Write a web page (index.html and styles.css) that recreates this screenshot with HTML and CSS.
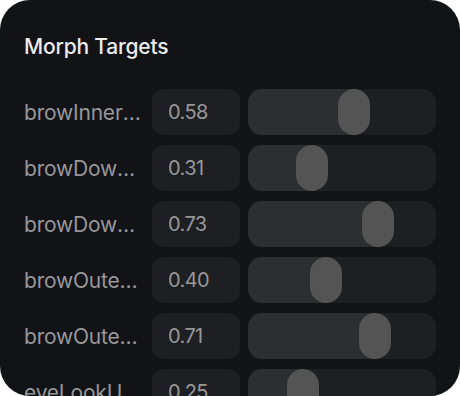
FILE: index.html
```html
<!DOCTYPE html>
<html>
<head>
<meta charset="utf-8">
<link rel="stylesheet" href="styles.css">
</head>
<body>
<div class="panel">
  <h2 class="title">Morph Targets</h2>
  <div class="rows">
    <div class="row">
      <span class="label">browInnerUp</span>
      <span class="value">0.58</span>
      <div class="track"><div class="fill" style="width: 106px"></div><div class="thumb" style="left: 90px"></div></div>
    </div>
    <div class="row">
      <span class="label">browDownLeft</span>
      <span class="value">0.31</span>
      <div class="track"><div class="fill" style="width: 64px"></div><div class="thumb" style="left: 48px"></div></div>
    </div>
    <div class="row">
      <span class="label">browDownRight</span>
      <span class="value">0.73</span>
      <div class="track"><div class="fill" style="width: 130px"></div><div class="thumb" style="left: 114px"></div></div>
    </div>
    <div class="row">
      <span class="label">browOuterUpLeft</span>
      <span class="value">0.40</span>
      <div class="track"><div class="fill" style="width: 78px"></div><div class="thumb" style="left: 62px"></div></div>
    </div>
    <div class="row">
      <span class="label">browOuterUpRight</span>
      <span class="value">0.71</span>
      <div class="track"><div class="fill" style="width: 127px"></div><div class="thumb" style="left: 111px"></div></div>
    </div>
    <div class="row">
      <span class="label">eyeLookUpLeft</span>
      <span class="value">0.25</span>
      <div class="track"><div class="fill" style="width: 55px"></div><div class="thumb" style="left: 39px"></div></div>
    </div>
  </div>
</div>
</body>
</html>
```
FILE: styles.css
```css
html, body {
  margin: 0;
  padding: 0;
  background: #ffffff;
}
body {
  font-family: Inter, "Noto Sans", sans-serif;
}
.panel {
  width: 460px;
  height: 396px;
  box-sizing: border-box;
  background: #121316;
  border-radius: 30px;
  overflow: hidden;
  padding: 35px 24px 0 24px;
}
.title {
  margin: 0 0 30px 0;
  font-size: 21px;
  line-height: 24px;
  font-weight: 500;
  color: #ececec;
  letter-spacing: -0.2px;
}
.rows {
  display: flex;
  flex-direction: column;
  gap: 10px;
}
.row {
  display: grid;
  grid-template-columns: 120px 88px 188px;
  column-gap: 8px;
  height: 46px;
  align-items: center;
}
.label {
  font-size: 21px;
  color: #979799;
  white-space: nowrap;
  overflow: hidden;
  text-overflow: ellipsis;
  letter-spacing: -0.2px;
}
.value {
  height: 46px;
  box-sizing: border-box;
  background: #1e1f22;
  border-radius: 12px;
  padding-left: 16px;
  display: flex;
  align-items: center;
  font-size: 20px;
  color: #979799;
  letter-spacing: -0.6px;
}
.track {
  position: relative;
  height: 46px;
  background: #1e1f22;
  border-radius: 14px;
  overflow: hidden;
}
.fill {
  position: absolute;
  left: 0;
  top: 0;
  bottom: 0;
  background: #2d2e31;
}
.thumb {
  position: absolute;
  top: 0;
  width: 32px;
  height: 46px;
  border-radius: 16px;
  background: #545454;
}
```
